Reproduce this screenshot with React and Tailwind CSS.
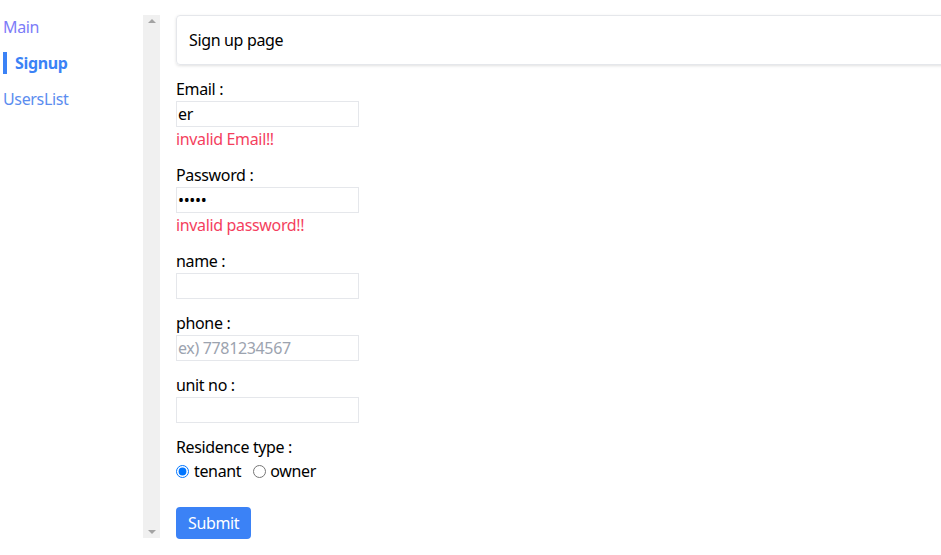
const fieldClass =
  'block w-[183px] h-[26px] border border-[#e5e7eb] bg-white pl-px text-base text-black outline-none placeholder:text-[#9ca3af]';

function Field({ label, type = 'text', value, placeholder, error }) {
  return (
    <div className="mb-3">
      <div className="leading-6">{label}</div>
      <input className={fieldClass} type={type} defaultValue={value} placeholder={placeholder} />
      {error && <div className="leading-6 text-[#f43f5e]">{error}</div>}
    </div>
  );
}

export default function App() {
  return (
    <div className="flex h-[555px] w-[941px] overflow-hidden bg-white font-['Segoe_UI','Noto_Sans',sans-serif] text-base tracking-[-0.35px] text-black">
      {/* Sidebar */}
      <nav className="w-[143px] shrink-0 pt-[15px] leading-6">
        <a className="block pl-[3px] text-[#7c7cf8]">Main</a>
        <a className="mt-3 flex items-center pl-[3px] font-bold text-[#3b82f6]">
          <span className="mr-2 h-[22px] w-1 bg-[#3b82f6]" />
          Signup
        </a>
        <a className="mt-3 block pl-[3px] text-[#5b8def]">UsersList</a>
      </nav>

      {/* Scrollbar */}
      <div className="mt-[15px] flex h-[523px] w-[17px] shrink-0 flex-col items-center justify-between bg-[#f0f0f0] py-1">
        <span className="h-0 w-0 border-x-[4px] border-b-[4px] border-x-transparent border-b-[#a3a3a3]" />
        <span className="h-0 w-0 border-x-[4px] border-t-[4px] border-x-transparent border-t-[#a3a3a3]" />
      </div>

      {/* Content */}
      <main className="flex-1 pl-4 pt-[15px]">
        <div className="mb-3 -mr-4 flex h-[50px] items-center rounded border border-[#e5e7eb] px-3 shadow-[0_1px_3px_rgba(0,0,0,0.12)]">
          Sign up page
        </div>

        <form>
          <Field label="Email :" value="er" error="invalid Email!!" />
          <Field label="Password :" type="password" value="12345" error="invalid password!!" />
          <Field label="name :" />
          <Field label="phone :" placeholder="ex) 7781234567" />
          <Field label="unit no :" />

          <div className="leading-6">Residence type :</div>
          <div className="flex h-6 items-center">
            <label className="flex items-center">
              <input type="radio" name="res" defaultChecked className="m-0 h-[13px] w-[13px] accent-[#0075ff]" />
              <span className="ml-[5px]">tenant</span>
            </label>
            <label className="ml-3 flex items-center">
              <input type="radio" name="res" className="m-0 h-[13px] w-[13px]" />
              <span className="ml-[4px]">owner</span>
            </label>
          </div>

          <button
            type="button"
            className="mt-6 h-8 rounded bg-[#3b82f6] px-3 text-white"
          >
            Submit
          </button>
        </form>
      </main>
    </div>
  );
}
